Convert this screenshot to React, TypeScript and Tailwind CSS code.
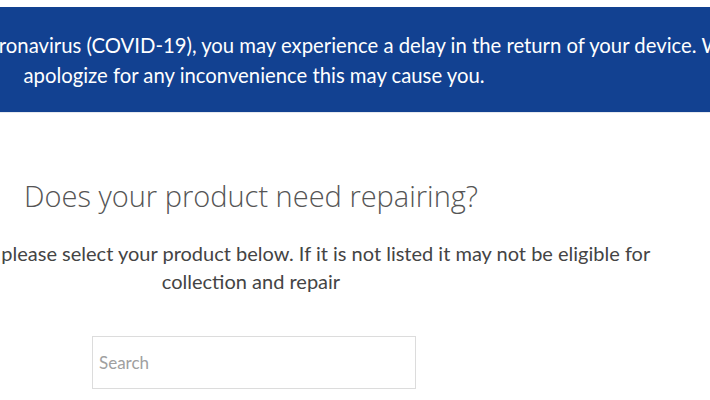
import React from "react";

export default function App() {
  return (
    <div className="w-[710px] h-[400px] overflow-hidden bg-white font-['Lato',sans-serif]">
      <div className="h-[7px] bg-white" />
      <div className="h-[105px] bg-[#124191] flex flex-col justify-center">
        <div className="w-[508px] flex flex-col items-center text-white text-[20.3px] leading-[30px]">
          <div className="whitespace-nowrap">
            Due to the impacts of Coronavirus (COVID-19), you may experience a delay in the return of your device. We
          </div>
          <div className="whitespace-nowrap">apologize for any inconvenience this may cause you.</div>
        </div>
      </div>
      <div className="h-px bg-[#e6e9ee]" />
      <div className="w-[502px] flex flex-col items-center">
        <h1 className="mt-[63px] text-[29px] leading-[40px] font-light text-[#555] whitespace-nowrap font-['Open_Sans',sans-serif]">
          Does your product need repairing?
        </h1>
        <div className="mt-[23px] flex flex-col items-center text-[20px] leading-[28px] text-[#444]">
          <div className="whitespace-nowrap">
            To book a repair, please select your product below. If it is not listed it may not be eligible for
          </div>
          <div className="whitespace-nowrap">collection and repair</div>
        </div>
      </div>
      <div className="mt-[41px] ml-[92px] w-[324px] h-[53px] border border-[#dcdcdc] flex items-center px-[6px]">
        <input
          className="w-full outline-none bg-transparent text-[17px] text-[#999] placeholder:text-[#a0a0a0] font-['Lato',sans-serif]"
          placeholder="Search"
        />
      </div>
    </div>
  );
}
